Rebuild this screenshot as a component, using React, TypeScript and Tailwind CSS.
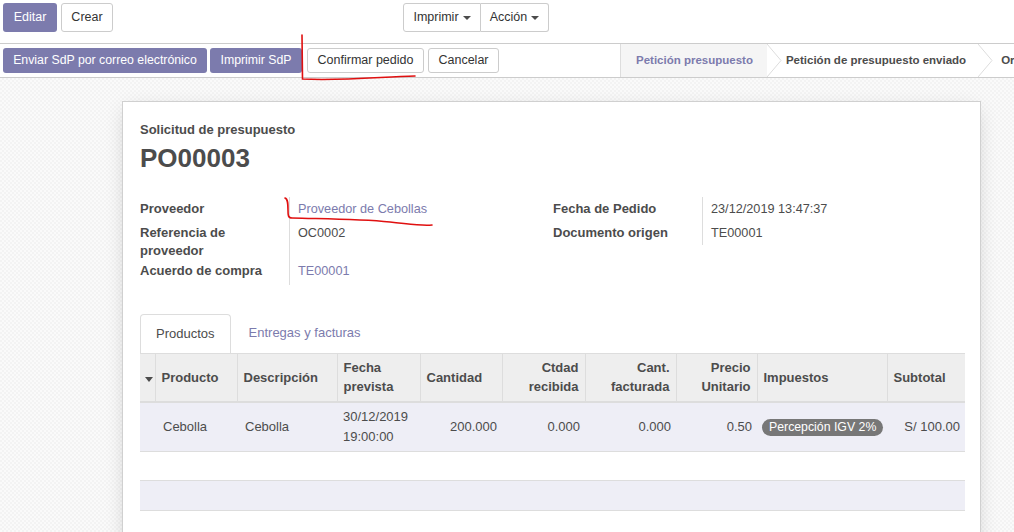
import React from "react";

const font = { fontFamily: '"Liberation Sans", Arial, sans-serif' };

function Caret() {
    return <span className="ml-1 inline-block h-0 w-0 border-x-[4px] border-t-[4px] border-x-transparent border-t-[#4c4c4c] align-middle" />;
}

function PrimaryBtn({ children, className = "" }: { children: React.ReactNode; className?: string }) {
    return (
        <button className={`h-[25px] rounded-[3px] bg-[#7c7bad] text-[12.3px] leading-none text-white ${className}`}>
            {children}
        </button>
    );
}

function DefaultBtn({ children, className = "" }: { children: React.ReactNode; className?: string }) {
    return (
        <button className={`h-[25px] rounded-[3px] border border-[#ccc] bg-white text-[12.5px] leading-none text-[#333] ${className}`}>
            {children}
        </button>
    );
}

function Chevron() {
    return (
        <svg width="16" height="33" viewBox="0 0 16 33" className="shrink-0">
            <path d="M0 0 L14 16.5 L0 33" fill="none" stroke="#ddd" strokeWidth="1" />
        </svg>
    );
}

type Field = { label: string; value: string; link?: boolean; row: string };

const fieldsLeft: Field[] = [
    { label: "Proveedor", value: "Proveedor de Cebollas", link: true, row: "h-[24px] pt-[3px]" },
    { label: "Referencia de proveedor", value: "OC0002", row: "h-[40px] pt-[3px]" },
    { label: "Acuerdo de compra", value: "TE00001", link: true, row: "h-[24px] pt-[1px]" },
];

const fieldsRight: Field[] = [
    { label: "Fecha de Pedido", value: "23/12/2019 13:47:37", row: "h-[24px] pt-[3px]" },
    { label: "Documento origen", value: "TE00001", row: "h-[24px] pt-[3px]" },
];

const columns = [
    { name: "", w: "w-[15px]" },
    { name: "Producto", w: "w-[82px]" },
    { name: "Descripción", w: "w-[100px]" },
    { name: "Fecha prevista", w: "w-[83px]" },
    { name: "Cantidad", w: "w-[82px]" },
    { name: "Ctdad recibida", w: "w-[83px]", right: true },
    { name: "Cant. facturada", w: "w-[91px]", right: true },
    { name: "Precio Unitario", w: "w-[81px]", right: true },
    { name: "Impuestos", w: "w-[130px]" },
    { name: "Subtotal", w: "w-[78px]" },
];

function FieldGroup({ items, className = "" }: { items: Field[]; className?: string }) {
    return (
        <div className={`grid content-start grid-cols-[149px_1fr] ${className}`}>
            {items.map((f) => (
                <React.Fragment key={f.label}>
                    <div className={`${f.row} pr-2 text-[13px] font-bold leading-[18px] text-[#4c4c4c]`}>{f.label}</div>
                    <div className={`${f.row} border-l border-[#ddd] pl-[8px] text-[12.7px] leading-[18px] ${f.link ? "text-[#7c7bad]" : "text-[#4c4c4c]"}`}>
                        {f.value}
                    </div>
                </React.Fragment>
            ))}
        </div>
    );
}

export default function App() {
    return (
        <div className="relative h-[532px] w-[1014px] overflow-hidden bg-white" style={font}>
            {/* control panel */}
            <div className="flex h-[44px] items-start border-b border-[#ccc] bg-white px-[3px] pt-[3px]">
                <div className="flex gap-[4px]">
                    <button className="h-[29px] w-[54px] rounded-[3px] bg-[#7c7bad] text-[12.5px] text-white">Editar</button>
                    <button className="h-[29px] w-[52px] rounded-[3px] border border-[#ccc] bg-white text-[12.5px] text-[#333]">Crear</button>
                </div>
                <div className="ml-[290px] flex">
                    <button className="h-[29px] w-[78px] rounded-l-[3px] border border-[#ccc] bg-white text-[12.5px] text-[#333]">
                        Imprimir<Caret />
                    </button>
                    <button className="h-[29px] w-[68px] rounded-r-[3px] border border-l-0 border-[#ccc] bg-white text-[12.5px] text-[#333]">
                        Acción<Caret />
                    </button>
                </div>
            </div>

            {/* status bar */}
            <div className="flex h-[34px] items-center border-b border-[#ccc] bg-white pl-[3px]">
                <div className="flex gap-[3px]">
                    <PrimaryBtn className="w-[204px]">Enviar SdP por correo electrónico</PrimaryBtn>
                    <PrimaryBtn className="w-[92px]">Imprimir SdP</PrimaryBtn>
                    <DefaultBtn className="ml-[2px] w-[117px]">Confirmar pedido</DefaultBtn>
                    <DefaultBtn className="ml-[1px] w-[71px]">Cancelar</DefaultBtn>
                </div>
                <div className="ml-auto flex h-full w-[394px] items-center self-stretch overflow-hidden whitespace-nowrap">
                    <div className="flex h-full items-center border-l border-[#ddd] bg-[#f5f5f5] pl-[15px] pr-[14px] text-[11.5px] font-bold text-[#7c7bad]">
                        Petición presupuesto
                    </div>
                    <Chevron />
                    <div className="flex h-full items-center pl-[3px] pr-[12px] text-[11.5px] font-bold text-[#4c4c4c]">
                        Petición de presupuesto enviado
                    </div>
                    <Chevron />
                    <div className="flex h-full items-center pl-[7px] text-[11.5px] font-bold text-[#4c4c4c]">Orden de compra</div>
                </div>
            </div>

            {/* form background */}
            <div className="h-full bg-[#f7f7f7] bg-[repeating-conic-gradient(#f3f3f3_0%_25%,#fafafa_0%_50%)] bg-[length:4px_4px] pl-[122px] pr-[33px] pt-[23px]">
                <div className="h-[460px] border border-[#d0d0d0] bg-white pl-[17px] pr-[16px] pt-[18px] shadow-[0_5px_20px_-5px_rgba(0,0,0,0.2)]">
                    <div className="text-[13px] font-bold text-[#4c4c4c]">Solicitud de presupuesto</div>
                    <div className="mt-[2px] text-[26px] font-bold leading-[32px] text-[#4c4c4c]">PO00003</div>

                    <div className="mt-[23px] flex items-start">
                        <FieldGroup items={fieldsLeft} className="w-[413px]" />
                        <FieldGroup items={fieldsRight} className="w-[300px]" />
                    </div>

                    {/* tabs */}
                    <div className="mt-[29px] flex h-[39px] items-end">
                        <div className="flex h-[39px] items-center rounded-t-[4px] border border-b-0 border-[#ddd] px-[15px] text-[13px] text-[#4c4c4c]">
                            Productos
                        </div>
                        <div className="flex h-[39px] items-center px-[18px] text-[13px] text-[#7c7bad]">Entregas y facturas</div>
                    </div>

                    <table className="w-[825px] table-fixed border-collapse text-[13px] text-[#4c4c4c]">
                        <thead>
                            <tr className="h-[49px] border-b-2 border-t border-[#ddd] bg-[#eee]">
                                {columns.map((c, i) => (
                                    <th
                                        key={i}
                                        className={`${c.w} border-l border-[#ddd] px-[6px] align-middle font-bold leading-[19px] first:border-l-0 first:px-0 ${c.right ? "text-right" : "text-left"}`}
                                    >
                                        {i === 0 ? (
                                            <span className="ml-[5px] inline-block h-0 w-0 border-x-[4px] border-t-[5px] border-x-transparent border-t-[#4c4c4c]" />
                                        ) : (
                                            c.name
                                        )}
                                    </th>
                                ))}
                            </tr>
                        </thead>
                        <tbody>
                            <tr className="h-[49px] border-b border-[#ddd] bg-[#eeeef6]">
                                <td />
                                <td className="px-[8px]">Cebolla</td>
                                <td className="px-[8px]">Cebolla</td>
                                <td className="px-[6px] leading-[20px]">
                                    30/12/2019
                                    <br />
                                    19:00:00
                                </td>
                                <td className="px-[5px] text-right">200.000</td>
                                <td className="px-[5px] text-right">0.000</td>
                                <td className="px-[5px] text-right">0.000</td>
                                <td className="px-[5px] text-right">0.50</td>
                                <td className="px-[5px]">
                                    <span className="inline-block whitespace-nowrap rounded-full bg-[#777] px-[7px] py-[1px] text-[12.3px] leading-[15px] text-white">
                                        Percepción IGV 2%
                                    </span>
                                </td>
                                <td className="px-[5px] text-right">S/ 100.00</td>
                            </tr>
                            <tr className="h-[29px] border-b border-[#ddd] bg-white">
                                <td colSpan={10} />
                            </tr>
                            <tr className="h-[30px] border-b border-[#ddd] bg-[#eeeef6]">
                                <td colSpan={10} />
                            </tr>
                        </tbody>
                    </table>
                </div>
            </div>

            {/* red pen annotations */}
            <svg className="pointer-events-none absolute left-0 top-0" width="1014" height="532">
                <path d="M302 35 L302.5 79 C340 81 380 77 415 76" fill="none" stroke="#e01010" strokeWidth="1.6" strokeLinecap="round" />
                <path d="M285 198 C288 199 288 204 288 210 C288 215 288 218 292 218 C330 219 360 219 390 222 C410 224 420 226 432 225" fill="none" stroke="#e01010" strokeWidth="1.6" strokeLinecap="round" />
            </svg>
        </div>
    );
}
